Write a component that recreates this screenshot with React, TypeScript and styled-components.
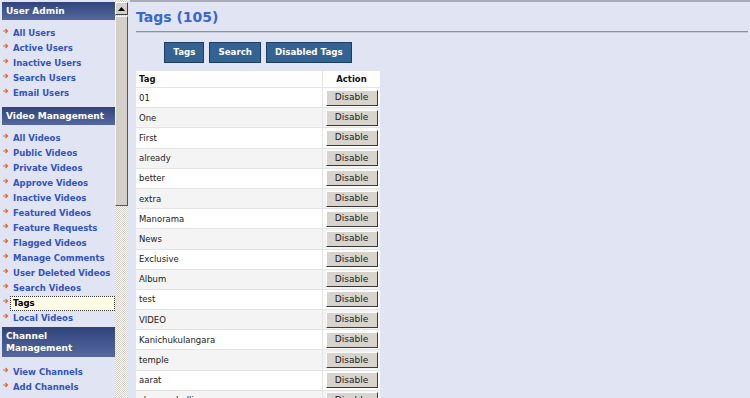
import React from 'react'
import styled, { createGlobalStyle } from 'styled-components'

const GlobalStyle = createGlobalStyle`
  html, body {
    margin: 0;
    padding: 0;
    background: #e1e4f2;
    font-family: "DejaVu Sans", Verdana, sans-serif;
  }
`

const Page = styled.div`
  display: flex;
  width: 750px;
  height: 398px;
  overflow: hidden;
  background: #e1e4f2;
`

const Sidebar = styled.div`
  width: 113px;
  padding: 2px 0 0 2px;
  flex-shrink: 0;
  overflow: hidden;
`

const SectionHead = styled.div`
  background: linear-gradient(to bottom, #30437a, #56699f);
  color: #fff;
  font-weight: bold;
  font-size: 9px;
  line-height: 12px;
  padding: 3px 4px;
`

const LinkList = styled.ul<{ $before?: number; $after?: number }>`
  list-style: none;
  margin: 0;
  padding: ${(p) => (p.$before ?? 6)}px 0 ${(p) => (p.$after ?? 6)}px 0;
`

const LinkItem = styled.li<{ $active?: boolean }>`
  position: relative;
  height: 15px;
  line-height: 13px;
  padding-left: 8px;
  font-size: 8.5px;
  font-weight: bold;
  white-space: nowrap;
  color: ${(p) => (p.$active ? '#000' : '#3253c0')};

  span {
    display: block;
    padding-left: 2px;
    border: 1px dotted ${(p) => (p.$active ? '#333' : 'transparent')};
    background: ${(p) => (p.$active ? '#fffde6' : 'transparent')};
  }

  svg {
    position: absolute;
    left: 1px;
    top: 2px;
  }
`

const ScrollBar = styled.div`
  width: 13px;
  flex-shrink: 0;
  display: flex;
  flex-direction: column;
  background: repeating-conic-gradient(#d4d0c8 0 25%, #fbfaf8 0 50%) 0 0 / 2px 2px;
`

const ScrollButton = styled.div`
  margin-top: 2px;
  height: 11px;
  background: #d4d0c8;
  border: 1px solid;
  border-color: #fff #404040 #404040 #fff;
  display: flex;
  align-items: center;
  justify-content: center;
`

const ScrollThumb = styled.div`
  margin-top: 1px;
  height: 188px;
  background: #d4d0c8;
  border: 1px solid;
  border-color: #f4f3f0 #555 #555 #f4f3f0;
`

const Main = styled.div`
  flex: 1;
  border-top: 2px solid #a9adb9;
  padding: 0 2px 0 6px;
  margin-left: 2px;
`

const Title = styled.h1`
  margin: 0;
  padding-top: 6px;
  height: 23px;
  font-size: 14px;
  line-height: 18px;
  font-weight: bold;
  color: #3766d6;
`

const Rule = styled.div`
  height: 1px;
  background: #8b919c;
  border-bottom: 1px solid #c9ccd8;
`

const Content = styled.div`
  width: 244px;
`

const TabBar = styled.div`
  display: flex;
  justify-content: center;
  gap: 5px;
  padding: 9px 0 8px 0;
`

const TabButton = styled.div`
  height: 19px;
  line-height: 19px;
  padding: 0 8px;
  background: #336393;
  border: 1px solid #1d3d63;
  color: #fff;
  font-size: 8.7px;
  font-weight: bold;
`

const Table = styled.table`
  width: 244px;
  border-collapse: collapse;
  background: #fff;
  font-size: 8.5px;
  color: #222;
`

const HeadCell = styled.th<{ $center?: boolean }>`
  height: 16px;
  padding: 0 3px;
  text-align: ${(p) => (p.$center ? 'center' : 'left')};
  font-weight: bold;
  font-size: 8.5px;
  color: #111;
  border-bottom: 1px solid #e4e4e4;
  border-left: 1px solid #e4e4e4;

  &:first-child {
    border-left: none;
  }
`

const Row = styled.tr<{ $odd?: boolean }>`
  height: 20.2px;
  background: ${(p) => (p.$odd ? '#f4f4f4' : '#fff')};
`

const Cell = styled.td<{ $action?: boolean }>`
  padding: 0 ${(p) => (p.$action ? '0' : '3px')};
  width: ${(p) => (p.$action ? '57px' : 'auto')};
  text-align: ${(p) => (p.$action ? 'center' : 'left')};
  border-bottom: 1px solid #e4e4e4;
  border-left: ${(p) => (p.$action ? '1px solid #e4e4e4' : 'none')};
`

const DisableButton = styled.button`
  width: 52px;
  height: 16px;
  padding: 0;
  font-family: "DejaVu Sans", Verdana, sans-serif;
  font-size: 9px;
  line-height: 13px;
  color: #1a1a1a;
  background: #d8d4cc;
  border: 1px solid;
  border-color: #fff #3a3a3a #3a3a3a #fff;
  vertical-align: middle;
`

const Bullet = () => (
  <svg width="6" height="6" viewBox="0 0 6 6">
    <path d="M0 3 H4 M2.5 1 L4.5 3 L2.5 5" stroke="#e8662a" strokeWidth="1.2" fill="none" />
  </svg>
)

const sections = [
  {
    title: 'User Admin',
    links: ['All Users', 'Active Users', 'Inactive Users', 'Search Users', 'Email Users'],
    before: 6,
    after: 6,
  },
  {
    title: 'Video Management',
    links: [
      'All Videos',
      'Public Videos',
      'Private Videos',
      'Approve Videos',
      'Inactive Videos',
      'Featured Videos',
      'Feature Requests',
      'Flagged Videos',
      'Manage Comments',
      'User Deleted Videos',
      'Search Videos',
      'Tags',
      'Local Videos',
    ],
    before: 6,
    after: 1,
  },
  { title: 'Channel Management', links: ['View Channels', 'Add Channels'], before: 8, after: 6 },
]

const tags = [
  '01',
  'One',
  'First',
  'already',
  'better',
  'extra',
  'Manorama',
  'News',
  'Exclusive',
  'Album',
  'test',
  'VIDEO',
  'Kanichukulangara',
  'temple',
  'aarat',
  'chemmeballi',
]

export default function App() {
  return (
    <>
      <GlobalStyle />
      <Page>
        <Sidebar>
          {sections.map((s) => (
            <div key={s.title}>
              <SectionHead>{s.title}</SectionHead>
              <LinkList $before={s.before} $after={s.after}>
                {s.links.map((l) => (
                  <LinkItem key={l} $active={l === 'Tags'}>
                    <Bullet />
                    <span>{l}</span>
                  </LinkItem>
                ))}
              </LinkList>
            </div>
          ))}
        </Sidebar>
        <ScrollBar>
          <ScrollButton>
            <svg width="7" height="4" viewBox="0 0 7 4">
              <path d="M3.5 0 L7 4 H0 Z" fill="#000" />
            </svg>
          </ScrollButton>
          <ScrollThumb />
        </ScrollBar>
        <Main>
          <Title>Tags (105)</Title>
          <Rule />
          <Content>
            <TabBar>
              <TabButton>Tags</TabButton>
              <TabButton>Search</TabButton>
              <TabButton>Disabled Tags</TabButton>
            </TabBar>
            <Table>
              <thead>
                <tr>
                  <HeadCell>Tag</HeadCell>
                  <HeadCell $center>Action</HeadCell>
                </tr>
              </thead>
              <tbody>
                {tags.map((t, i) => (
                  <Row key={t} $odd={i % 2 === 1}>
                    <Cell>{t}</Cell>
                    <Cell $action>
                      <DisableButton>Disable</DisableButton>
                    </Cell>
                  </Row>
                ))}
              </tbody>
            </Table>
          </Content>
        </Main>
      </Page>
    </>
  )
}
